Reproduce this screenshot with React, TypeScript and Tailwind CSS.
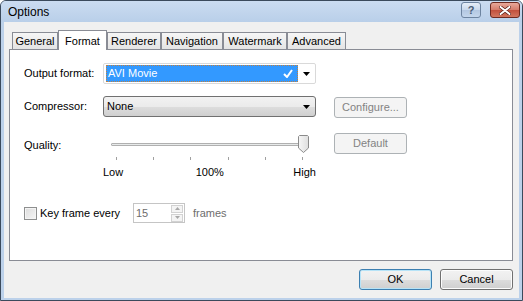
import React from "react";

const tabs = ["General", "Format", "Renderer", "Navigation", "Watermark", "Advanced"];
const tabWidths: Record<string, string> = {
  General: "w-[46px]",
  Format: "w-[49px]",
  Renderer: "w-[54px]",
  Navigation: "w-[62px]",
  Watermark: "w-[64px]",
  Advanced: "w-[59px]",
};

function Arrow({ color = "#000" }: { color?: string }) {
  return (
    <svg width="7" height="4" viewBox="0 0 7 4">
      <polygon points="0,0 7,0 3.5,4" fill={color} />
    </svg>
  );
}

function Button({ label, disabled, focused }: { label: string; disabled?: boolean; focused?: boolean }) {
  if (disabled) {
    return (
      <div className="w-[73px] h-[21px] flex items-center justify-center rounded-[3px] border border-[#adb2b5] bg-[#f4f4f4] text-[#838383]">
        {label}
      </div>
    );
  }
  return (
    <div
      className={`w-[73px] h-[21px] flex items-center justify-center rounded-[3px] border ${
        focused ? "border-[#3c7fb1] shadow-[inset_0_0_0_1px_#b6e3f7]" : "border-[#707070] shadow-[inset_0_0_0_1px_#fcfcfc]"
      } bg-[linear-gradient(#f2f2f2_0%,#ebebeb_50%,#dddddd_51%,#cfcfcf_100%)] text-black`}
    >
      {label}
    </div>
  );
}

export default function App() {
  return (
    <div className="w-[523px] h-[301px] flex flex-col bg-[#bcd1ea] border border-[#3b4a5c] rounded-t-[6px] overflow-hidden font-['Liberation_Sans',Arial,sans-serif] text-[11px] text-black">
      {/* Title bar */}
      <div className="h-[21px] flex items-center justify-between bg-[linear-gradient(#cbdcf1,#b9cfe9)]">
        <span className="pl-[7px] text-[12px] text-black">Options</span>
        <div className="flex items-center gap-[9px] pr-[2px] self-start mt-[1px]">
          <div className="w-[20px] h-[16px] rounded-[3px] border border-[#6d84a0] bg-[linear-gradient(#e6eef8_0%,#c8d8ec_50%,#b3c7e1_51%,#c4d6ec_100%)] flex items-center justify-center text-[11px] font-bold text-[#4a5d75] leading-none">
            ?
          </div>
          <div className="w-[30px] h-[16px] rounded-[3px] border border-[#6e2a20] bg-[linear-gradient(#e8a89a_0%,#d47b6a_50%,#c2503c_51%,#d2765f_100%)] flex items-center justify-center">
            <svg width="12" height="9" viewBox="0 0 12 9">
              <path d="M1.5 1 L10.5 8 M10.5 1 L1.5 8" stroke="#5a1f17" strokeWidth="3.4" strokeLinecap="round" />
              <path d="M1.5 1 L10.5 8 M10.5 1 L1.5 8" stroke="#ffffff" strokeWidth="2" strokeLinecap="round" />
            </svg>
          </div>
        </div>
      </div>

      {/* Client area */}
      <div className="flex-1 mx-[3px] mb-[2px] bg-[#f0f0f0] pl-[5px] pt-[8px] flex flex-col">
        {/* Tabs */}
        <div className="relative z-10 flex items-end h-[19px] ml-[3px]">
          {tabs.map((t) =>
            t === "Format" ? (
              <div
                key={t}
                className={`${tabWidths[t]} h-[20px] -mb-px bg-white border border-b-0 border-[#898c95] flex justify-center pt-[2px]`}
              >
                {t}
              </div>
            ) : (
              <div
                key={t}
                className={`${tabWidths[t]} h-[17px] border border-b-0 border-[#898c95] bg-[linear-gradient(#f6f6f6,#e4e4e4)] flex items-center justify-center`}
              >
                {t}
              </div>
            )
          )}
        </div>

        {/* Panel */}
        <div className="w-[504px] h-[212px] bg-white border border-[#898c95] pl-[14px] pt-[13px] flex flex-col">
          {/* Output format */}
          <div className="flex items-center h-[21px]">
            <span className="w-[79px]">Output format:</span>
            <div className="w-[213px] h-[21px] rounded-[2px] border border-[#d9d9d9] bg-white flex items-center pl-[2px] pr-[5px]">
              <div className="w-[192px] h-[17px] bg-[#3399ff] outline outline-1 outline-dotted outline-[#c08040] -outline-offset-1 flex items-center justify-between pl-[2px] pr-[5px] text-white">
                <span>AVI Movie</span>
                <svg width="10" height="9" viewBox="0 0 10 9">
                  <path d="M1 5 L4 8 L9 1" stroke="#fff" strokeWidth="2" fill="none" />
                </svg>
              </div>
              <div className="flex-1 flex justify-end">
                <Arrow />
              </div>
            </div>
          </div>

          {/* Compressor */}
          <div className="flex items-center h-[21px] mt-[12px]">
            <span className="w-[79px]">Compressor:</span>
            <div className="w-[213px] h-[21px] rounded-[3px] border border-[#707070] bg-[linear-gradient(#f2f2f2_0%,#ebebeb_50%,#dddddd_51%,#cfcfcf_100%)] flex items-center justify-between pl-[3px] pr-[5px]">
              <span>None</span>
              <Arrow />
            </div>
            <div className="ml-[18px] mt-[1px]">
              <Button label="Configure..." disabled />
            </div>
          </div>

          {/* Quality */}
          <div className="flex items-start mt-[16px]">
            <span className="w-[79px] mt-[4px]">Quality:</span>
            <div className="w-[213px] flex flex-col">
              <div className="relative h-[21px]">
                <div className="absolute left-[8px] top-[10px] w-[191px] h-[3px] border border-[#b0b0b0] bg-[#e7eaea] rounded-[1px]" />
                <svg className="absolute left-[195px] top-[2px]" width="11" height="18" viewBox="0 0 11 18">
                  <defs>
                    <linearGradient id="th" x1="0" y1="0" x2="1" y2="0">
                      <stop offset="0" stopColor="#f7f7f7" />
                      <stop offset="1" stopColor="#dedede" />
                    </linearGradient>
                  </defs>
                  <polygon points="0.5,1.5 1.5,0.5 9.5,0.5 10.5,1.5 10.5,13 5.5,17.5 0.5,13" fill="url(#th)" stroke="#8b8b8b" />
                </svg>
              </div>
              <div className="flex justify-between w-[187px] ml-[13px] mt-[3px] h-[3px]">
                {[0, 1, 2, 3, 4, 5].map((i) => (
                  <div key={i} className="w-px h-[3px] bg-[#a0a0a0]" />
                ))}
              </div>
              <div className="flex justify-between mt-[6px] leading-[13px]">
                <span>Low</span>
                <span className="ml-[3px]">100%</span>
                <span>High</span>
              </div>
            </div>
            <div className="ml-[18px]">
              <Button label="Default" disabled />
            </div>
          </div>

          {/* Key frame */}
          <div className="flex items-center h-[20px] mt-[24px]">
            <div className="w-[109px] flex items-center">
              <div className="w-[13px] h-[13px] border border-[#8e8f8f] bg-[linear-gradient(135deg,#dcdcdc,#f6f6f6)] shadow-[inset_0_0_0_1px_#f4f4f4]" />
              <span className="ml-[3px]">Key frame every</span>
            </div>
            <div className="w-[52px] h-[20px] border border-[#c5c5c5] bg-white flex items-center justify-between pl-[2px] pr-px">
              <span className="text-[#6d6d6d]">15</span>
              <div className="flex flex-col gap-px">
                <div className="w-[12px] h-[8px] border border-[#d2d2d2] bg-[#f4f4f4] flex items-center justify-center">
                  <svg width="5" height="3" viewBox="0 0 5 3">
                    <polygon points="2.5,0 5,3 0,3" fill="#a8a8a8" />
                  </svg>
                </div>
                <div className="w-[12px] h-[8px] border border-[#d2d2d2] bg-[#f4f4f4] flex items-center justify-center">
                  <svg width="5" height="3" viewBox="0 0 5 3">
                    <polygon points="0,0 5,0 2.5,3" fill="#a8a8a8" />
                  </svg>
                </div>
              </div>
            </div>
            <span className="ml-[8px] text-[#6d6d6d]">frames</span>
          </div>
        </div>

        {/* Dialog buttons */}
        <div className="w-[504px] flex justify-end gap-[8px] mt-[8px]">
          <Button label="OK" focused />
          <Button label="Cancel" />
        </div>
      </div>
    </div>
  );
}
